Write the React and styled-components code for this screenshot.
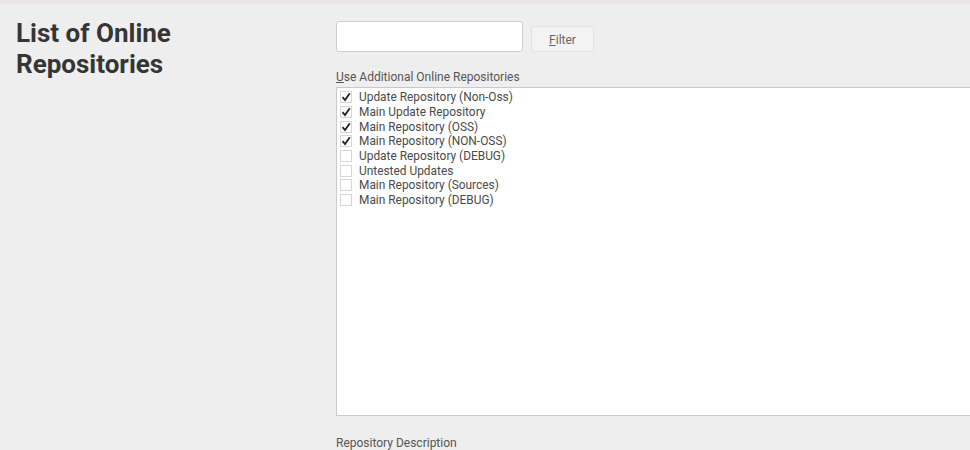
import React from 'react';
import styled, { createGlobalStyle } from 'styled-components';

const Global = createGlobalStyle`
  html, body {
    margin: 0;
    padding: 0;
    background: #eeeeee;
    font-family: Roboto, "Liberation Sans", sans-serif;
    overflow: hidden;
  }
`;

const Page = styled.div`
  width: 970px;
  height: 450px;
  background: #eeeeee;
  border-top: 4px solid #ebe6e4;
  box-sizing: border-box;
  display: flex;
  overflow: hidden;
`;

const Side = styled.div`
  width: 336px;
  flex-shrink: 0;
  padding: 14px 0 0 16px;
  box-sizing: border-box;
`;

const Title = styled.h1`
  margin: 0;
  font-size: 26px;
  line-height: 31px;
  font-weight: 700;
  color: #353535;
`;

const Main = styled.div`
  flex: 1;
  display: flex;
  flex-direction: column;
  padding-top: 17px;
  min-width: 0;
`;

const FilterRow = styled.div`
  display: flex;
  align-items: flex-end;
  gap: 8px;
`;

const Input = styled.input`
  width: 187px;
  height: 31px;
  box-sizing: border-box;
  border: 1px solid #cfcfcf;
  border-radius: 3px;
  background: #ffffff;
  outline: none;
`;

const Button = styled.button`
  width: 63px;
  height: 26px;
  box-sizing: border-box;
  border: 1px solid #e2e2e2;
  border-radius: 2px;
  background: #f3f3f3;
  color: #666666;
  font-family: inherit;
  font-size: 12px;
  padding: 2px 0 0;
`;

const Label = styled.div`
  margin-top: 18px;
  font-size: 12px;
  line-height: 14px;
  color: #555555;
`;

const ListBox = styled.div`
  margin-top: 3px;
  height: 329px;
  width: 700px;
  box-sizing: border-box;
  border: 1px solid #c9c9c9;
  background: #ffffff;
  padding: 2px 0 0 3px;
`;

const Row = styled.div`
  display: flex;
  align-items: center;
  height: 14.7px;
  gap: 7px;
  font-size: 11.9px;
  color: #4a4a4a;
`;

const Box = styled.span`
  width: 12px;
  height: 12px;
  box-sizing: border-box;
  border: 1px solid #d6d6d6;
  background: #ffffff;
  display: flex;
  align-items: center;
  justify-content: center;
  flex-shrink: 0;
`;

const Caption = styled.div`
  margin-top: 20px;
  font-size: 12px;
  color: #555555;
`;

const repos = [
  ['Update Repository (Non-Oss)', true],
  ['Main Update Repository', true],
  ['Main Repository (OSS)', true],
  ['Main Repository (NON-OSS)', true],
  ['Update Repository (DEBUG)', false],
  ['Untested Updates', false],
  ['Main Repository (Sources)', false],
  ['Main Repository (DEBUG)', false],
];

const Check = () => (
  <svg width="10" height="10" viewBox="0 0 10 10">
    <path d="M1.5 5.2 L4 8 L8.8 1.2" fill="none" stroke="#222" strokeWidth="1.8" />
  </svg>
);

export default function App() {
  return (
    <Page>
      <Global />
      <Side>
        <Title>
          List of Online
          <br />
          Repositories
        </Title>
      </Side>
      <Main>
        <FilterRow>
          <Input />
          <Button>
            <u>F</u>ilter
          </Button>
        </FilterRow>
        <Label>
          <u>U</u>se Additional Online Repositories
        </Label>
        <ListBox>
          {repos.map(([name, on]) => (
            <Row key={name}>
              <Box>{on && <Check />}</Box>
              {name}
            </Row>
          ))}
        </ListBox>
        <Caption>Repository Description</Caption>
      </Main>
    </Page>
  );
}
